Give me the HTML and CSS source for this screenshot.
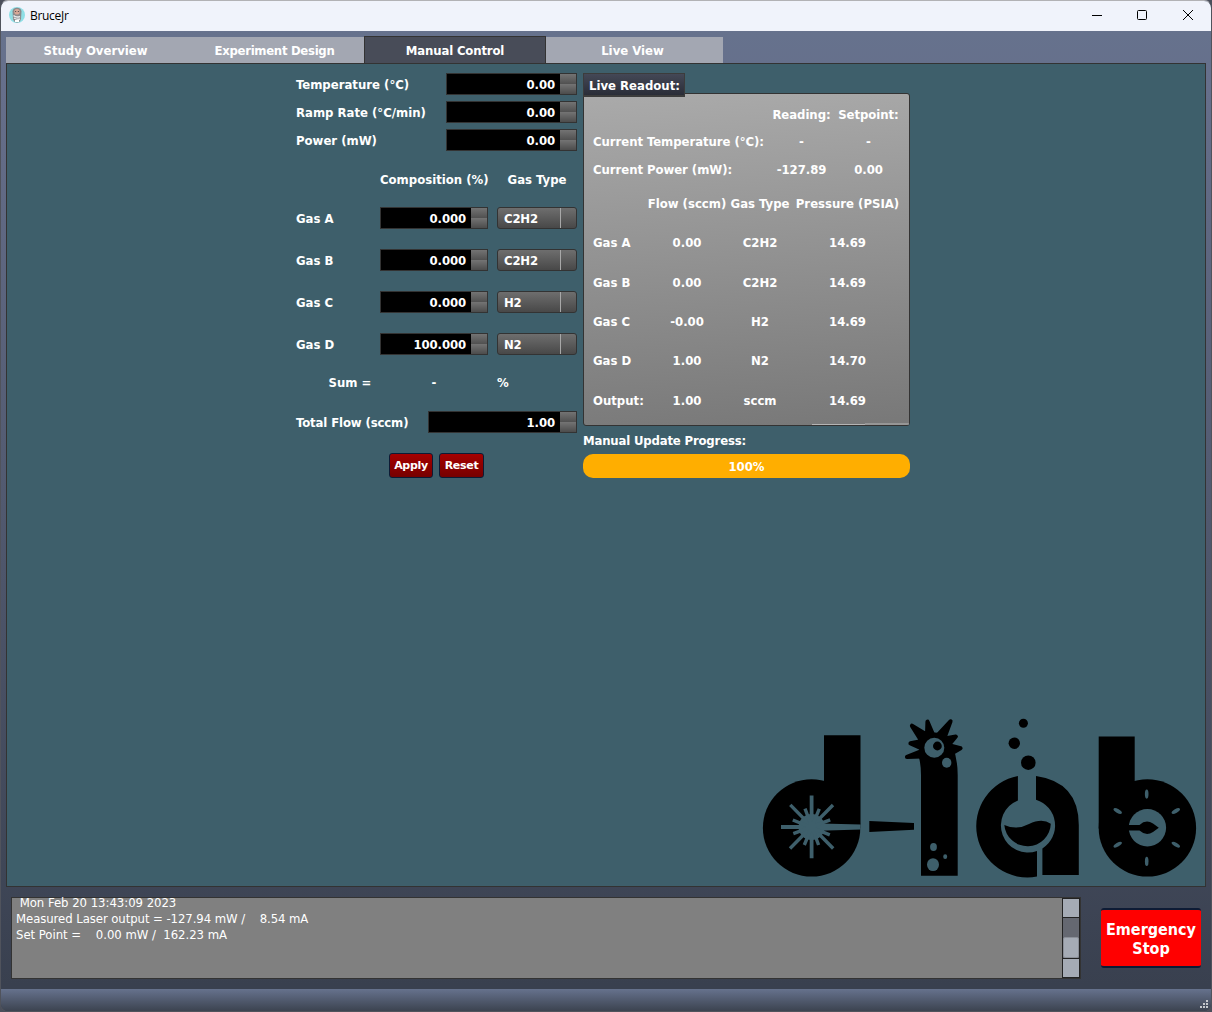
FILE: index.html
```html
<!DOCTYPE html>
<html lang="en">
<head>
<meta charset="utf-8">
<title>BruceJr</title>
<link rel="stylesheet" href="styles.css">
</head>
<body>
<div class="window">
  <header class="titlebar">
    <svg class="app-icon" width="16" height="16" viewBox="0 0 16 16">
      <circle cx="8" cy="8" r="8" fill="#8fdfe6"/>
      <path d="M3.500 4.500Q4 .8 8 .8T12.500 4.500L12 12Q11 15.500 8 15.500T4 12Z" fill="#8b8a8c"/>
      <circle cx="8" cy="4.800" r="2.800" fill="#d7a796"/>
      <path d="M6 4.500h1.200M8.800 4.500H10" stroke="#5b5558"/>
      <path d="M4.500 8.500Q7 11 11 9.500M5 11Q8 13 11 12" fill="none" stroke="#e6e8ea" stroke-width="1.500"/>
      <path d="M6 14h4" stroke="#fff" stroke-width="2"/>
    </svg>
    <span class="app-name">BruceJr</span>
    <svg class="window-buttons" width="104" height="12" viewBox="0 0 104 12" fill="none" stroke="#000">
      <path d="M0 6.500h10" />
      <rect x="45.500" y="1.500" width="9" height="9" rx="1"/>
      <path d="M91 1l10 10M101 1l-10 10"/>
    </svg>
  </header>

  <nav class="tabs">
    <div class="tab"><span>Study Overview</span></div>
    <div class="tab design"><span>Experiment Design</span></div>
    <div class="tab active"><span>Manual Control</span></div>
    <div class="tab live"><span>Live View</span></div>
  </nav>

  <main class="pane">
    <div class="columns">
      <section class="form">
        <div class="row"><label>Temperature (°C)</label><div class="spin w131"><b>0.00</b><i></i></div></div>
        <div class="row"><label>Ramp Rate (°C/min)</label><div class="spin w131"><b>0.00</b><i></i></div></div>
        <div class="row"><label>Power (mW)</label><div class="spin w131"><b>0.00</b><i></i></div></div>
        <div class="gas head"><span></span><span>Composition (%)</span><span>Gas Type</span></div>
        <div class="gas"><label>Gas A</label><div class="spin"><b>0.000</b><i></i></div><div class="combo">C2H2</div></div>
        <div class="gas"><label>Gas B</label><div class="spin"><b>0.000</b><i></i></div><div class="combo">C2H2</div></div>
        <div class="gas"><label>Gas C</label><div class="spin"><b>0.000</b><i></i></div><div class="combo">H2</div></div>
        <div class="gas"><label>Gas D</label><div class="spin"><b>100.000</b><i></i></div><div class="combo">N2</div></div>
        <div class="gas sum"><span>Sum =</span><span>-</span><span>%</span></div>
        <div class="row total"><label>Total Flow (sccm)</label><div class="spin w149"><b>1.00</b><i></i></div></div>
        <div class="actions"><button>Apply</button><button>Reset</button></div>
      </section>

      <section class="readout">
        <h2 class="group-title">Live Readout:</h2>
        <div class="group">
          <div class="upper">
            <span></span><span>Reading:</span><span>Setpoint:</span>
            <span>Current Temperature (°C):</span><span>-</span><span>-</span>
            <span>Current Power (mW):</span><span>-127.89</span><span>0.00</span>
          </div>
          <div class="lower">
            <span></span><span>Flow (sccm)</span><span>Gas Type</span><span>Pressure (PSIA)</span>
            <span>Gas A</span><span>0.00</span><span>C2H2</span><span>14.69</span>
            <span>Gas B</span><span>0.00</span><span>C2H2</span><span>14.69</span>
            <span>Gas C</span><span>-0.00</span><span>H2</span><span>14.69</span>
            <span>Gas D</span><span>1.00</span><span>N2</span><span>14.70</span>
            <span>Output:</span><span>1.00</span><span>sccm</span><span>14.69</span>
          </div>
          <svg class="edge" width="97" height="2" viewBox="0 0 97 2"><path d="M0 1.500h53M53 1h44" stroke="#b4b4b4"/></svg>
        </div>
        <div class="progress-label">Manual Update Progress:</div>
        <div class="progress">100%</div>
      </section>
    </div>

    <svg class="logo" width="456" height="181" viewBox="749 705 456 181">
      <!-- d with laser burst -->
      <circle cx="811.600" cy="827.900" r="48.700"/>
      <path d="M824 735.200h36.500v93H824z"/>
      <g class="cut">
        <circle cx="811.600" cy="827" r="13"/>
        <path d="M811 823.200L860.700 824.400V829.400L811 831z"/>
      </g>
      <g class="cut-line" stroke-width="3.800">
        <path d="M811.600 795.600v62.700M781 827h30"/>
        <path stroke-width="3.400" d="M790.300 804.900l42.900 43.600M833 805l-43 43.500"/>
        <path stroke-width="3.400" d="M805 808.700l13.600 36.300M819.300 808.900l-15 36.100M792.800 820l37 14.900M830.200 819.800l-36.900 13.900"/>
      </g>
      <path d="M869.300 821L914 823v6.800L869.300 832z"/>
      <!-- l creature -->
      <path d="M921 875.800V775Q921 764 918.500 756L930 740L953 747Q957.700 760 957.700 775V875.800z"/>
      <circle cx="934.500" cy="748" r="15.500"/>
      <path class="spikes" d="M912 725.800L922 742L929 736zM927.500 721.800L927 737L934 737zM950.500 721.300L937 736L944 739zM955.800 736.500L942 739L948 746zM960.500 748.300L948 745L949 755zM907 757L922 751L922 756.500zM910.500 743.300L922 741L921 748z"/>
      <g class="cut">
        <circle cx="934.300" cy="747.700" r="10"/>
        <ellipse cx="946.700" cy="762.700" rx="4.700" ry="5"/>
        <ellipse cx="933.500" cy="847" rx="3.400" ry="3.900"/>
        <ellipse cx="945.200" cy="856.700" rx="2" ry="2.400"/>
        <ellipse cx="933" cy="864.600" rx="6" ry="6.400"/>
      </g>
      <circle cx="937.400" cy="746" r="4.400"/>
      <!-- a with flask -->
      <circle cx="1023.400" cy="723.300" r="4.500"/>
      <circle cx="1014.300" cy="743.300" r="5.700"/>
      <circle cx="1028.300" cy="762.700" r="7.300"/>
      <path d="M1017.900 776A51 51 0 0 0 1037 876.600V850.900A27 27 0 0 1 1017.900 800.400z"/>
      <path d="M1036 776Q1078.700 782 1078.800 825V875H1042.400V848.400A27 27 0 0 0 1036 799.700z"/>
      <path d="M1004.300 825Q1017 830.500 1029 824Q1042 817.500 1050.800 823.700A23.300 23.300 0 0 1 1004.300 825z"/>
      <!-- b with valve -->
      <circle cx="1147.400" cy="827.900" r="48.700"/>
      <path d="M1098.700 736.400h36v92h-36z"/>
      <g class="cut">
        <circle cx="1147.400" cy="827.700" r="18.700"/>
        <ellipse cx="1146.700" cy="794.100" rx="1.800" ry="4.600"/>
        <ellipse cx="1146.700" cy="861.400" rx="1.800" ry="4.600"/>
        <ellipse cx="1117.700" cy="811" rx="1.900" ry="4.700" transform="rotate(-60 1117.700 811)"/>
        <ellipse cx="1175.800" cy="811" rx="1.900" ry="4.700" transform="rotate(60 1175.800 811)"/>
        <ellipse cx="1117.700" cy="844.700" rx="1.900" ry="4.700" transform="rotate(60 1117.700 844.700)"/>
        <ellipse cx="1175.800" cy="844.700" rx="1.900" ry="4.700" transform="rotate(-60 1175.800 844.700)"/>
      </g>
      <path d="M1127 824.900H1139.500Q1146 819 1153 823.500L1158.800 827.700L1153 832Q1146 836.500 1139.500 830.500H1127z"/>
    </svg>
  </main>

  <footer class="bottom">
    <div class="log">
      <pre class="log-text"> Mon Feb 20 13:43:09 2023
<span class="tight">Measured Laser output = -127.94 mW /    8.54 mA</span>
Set Point =    0.00 mW /  162.23 mA</pre>
      <div class="scroll"><span class="btn up"></span><span class="track"><span class="thumb"></span></span><span class="btn down"></span></div>
    </div>
    <button class="stop">Emergency<br>Stop</button>
  </footer>

  <div class="status">
    <svg width="9" height="9" viewBox="0 0 9 9" fill="#c4c7cc"><path d="M6 0h2v2H6zM3 3h2v2H3zM6 3h2v2H6zM0 6h2v2H0zM3 6h2v2H3zM6 6h2v2H6z"/></svg>
  </div>
</div>
</body>
</html>
```
FILE: styles.css
```css
* { box-sizing: border-box; }
body {
  margin: 0;
  background: #4b4f5b;
  font: bold 13px/16px "DejaVu Sans Condensed", "DejaVu Sans", sans-serif;
  font-stretch: condensed;
  color: #fff;
  white-space: nowrap;
}
button, h2 { font: inherit; color: inherit; margin: 0; padding: 0; }
.window {
  width: 1212px;
  height: 1012px;
  border: 1px solid #50535c;
  border-top-color: #b2b2b5;
  border-radius: 8px;
  display: flex;
  flex-direction: column;
  overflow: hidden;
  background: linear-gradient(#66728d 30px, #666f8b 90px, #39404f 985px);
}
.titlebar {
  height: 30px;
  flex: none;
  background: #f0f3fb;
  display: flex;
  align-items: center;
  padding: 0 15px 2px 8px;
}
.app-name {
  margin-left: 5px;
  padding-top: 2px;
  font: 12px/16px "Open Sans", "Noto Sans", sans-serif;
  letter-spacing: -0.3px;
  color: #000;
}
.window-buttons { margin-left: auto; }

.tabs { height: 32px; flex: none; display: flex; align-items: flex-end; padding-left: 5px; }
.tab {
  width: 179px;
  height: 26px;
  padding-top: 2px;
  background: #a3a7b2;
  display: flex;
  align-items: center;
  justify-content: center;
}
.tab.design { letter-spacing: -0.3px; }
.tab.active { width: 182px; height: 27px; background: #484c58; border: 1px solid #333; border-bottom: 0; letter-spacing: -0.15px; }
.tab.live { width: 177px; padding-right: 4px; }

.pane {
  height: 824px;
  flex: none;
  margin: 0 5px;
  border: 1px solid #333;
  background: #3e5f6b;
  display: flex;
  flex-direction: column;
}
.columns { display: flex; padding: 9px 0 0 289px; gap: 6px; }
.form { width: 281px; }
.form label { padding-top: 2px; }
.row { height: 22px; margin-bottom: 6px; display: flex; align-items: center; justify-content: space-between; }
.spin {
  height: 22px;
  border: 1px solid #333;
  background: #000;
  display: flex;
  align-items: center;
  justify-content: flex-end;
}
.spin b { padding: 2px 5px 0 0; letter-spacing: -0.1px; }
.spin i {
  width: 16px;
  height: 20px;
  background: linear-gradient(#737373, #505050 10px, #747474 10px, #4c4c4c);
}
.w131 { width: 131px; }
.w149 { width: 149px; }
.gas {
  height: 22px;
  margin-bottom: 20px;
  display: grid;
  grid-template-columns: 84px 108px 80px;
  align-items: center;
}
.gas > :nth-child(3) { margin-left: 9px; width: 80px; }
.gas.head { margin: 18px 0 16px; text-align: center; }
.combo {
  height: 22px;
  border: 1px solid #333;
  border-radius: 3px;
  padding: 3px 0 0 6px;
  letter-spacing: -0.2px;
  background:
    linear-gradient(#a8a8a8, #a8a8a8) 62px 0 / 1px 20px no-repeat,
    linear-gradient(#6e6e6e, #484848);
}
.gas.sum { margin: -3px 0 17px; text-align: center; }
.sum > :first-child { padding-left: 24px; }
.gas.sum > :last-child { text-align: left; }
.total label { letter-spacing: -0.12px; }
.actions { display: flex; gap: 6px; padding: 14px 0 0 93px; }
.actions button {
  width: 44px;
  height: 25px;
  border: 1px solid #0d1b35;
  border-radius: 3px;
  background: linear-gradient(#a60000, #760000);
  font: bold 11px/16px "DejaVu Sans", sans-serif;
  letter-spacing: -0.3px;
}
.actions button + button { width: 45px; }

.readout { width: 327px; }
.group-title {
  width: 102px;
  height: 24px;
  border: 1px solid #3c3c3c;
  border-width: 1px 1px 2px;
  background: linear-gradient(#444856, #2a2d38);
  position: relative;
  z-index: 1;
  padding: 4px 0 0 5px;
}
.group {
  height: 333px;
  margin-top: -4px;
  border: 1px solid #333;
  border-radius: 3px;
  background: linear-gradient(176deg, #aaa, #787878);
  padding: 7px 6px 0 9px;
  position: relative;
}
.upper, .lower { display: grid; text-align: center; align-items: center; }
.upper { grid-template-columns: 175px 67px 67px; grid-template-rows: 27px 28px 28px; letter-spacing: -0.05px; }
.lower {
  grid-template-columns: 53px 82px 64px 111px;
  grid-template-rows: 34px 39px 41px 37px 41px 39px;
  margin-top: 3px;
}
.lower span:nth-child(n+5) { padding-top: 4px; }
.upper > :nth-child(3n+1), .lower > :nth-child(4n+1) { text-align: left; }
.edge { position: absolute; right: 0; bottom: 0; }
.progress-label { margin-top: 7px; letter-spacing: -0.17px; }
.progress {
  margin-top: 5px;
  height: 24px;
  border-radius: 10px;
  background: #ffae00;
  text-align: center;
  line-height: 25px;
}
.logo { margin: auto 0 0 auto; flex: none; display: block; }
.cut { fill: #3e5f6b; }
.cut-line { stroke: #3e5f6b; fill: none; }
.spikes { stroke: #000; stroke-width: 4.2; stroke-linejoin: round; }

.bottom { display: flex; padding: 10px 10px 0; height: 102px; flex: none; }
.log {
  width: 1070px;
  height: 82px;
  border: 1px solid #333;
  background: #808080;
  display: flex;
  justify-content: space-between;
}
.log-text {
  margin: -3px 0 0 4px;
  font: 13px/16px "DejaVu Sans Condensed", "DejaVu Sans", sans-serif;
  font-stretch: condensed;
  letter-spacing: -0.03px;
}
.tight { letter-spacing: -0.07px; }
.scroll { width: 18px; display: flex; flex-direction: column; border: 1px solid #222; }
.btn { height: 19px; background: #a5abb5; flex: none; }
.up { border-bottom: 1px solid #222; }
.down { border-top: 1px solid #222; }
.track { flex: 1; background: #656871; display: flex; align-items: flex-end; }
.thumb { flex: 1; height: 21px; background: #a5abb5; border: 1px solid #8b8f98; border-radius: 2px; }
.stop {
  width: 100px;
  height: 60px;
  margin: 11px 0 0 20px;
  padding-top: 2px;
  border: solid #0d1b35;
  border-width: 2px 0;
  border-radius: 3px;
  background: #f00;
  font-size: 16px;
  line-height: 19px;
}
.status {
  height: 22px;
  flex: none;
  background: linear-gradient(#66728d, #3c4350);
  display: flex;
  justify-content: flex-end;
  align-items: flex-end;
  padding: 0 2px 2px;
}
```
